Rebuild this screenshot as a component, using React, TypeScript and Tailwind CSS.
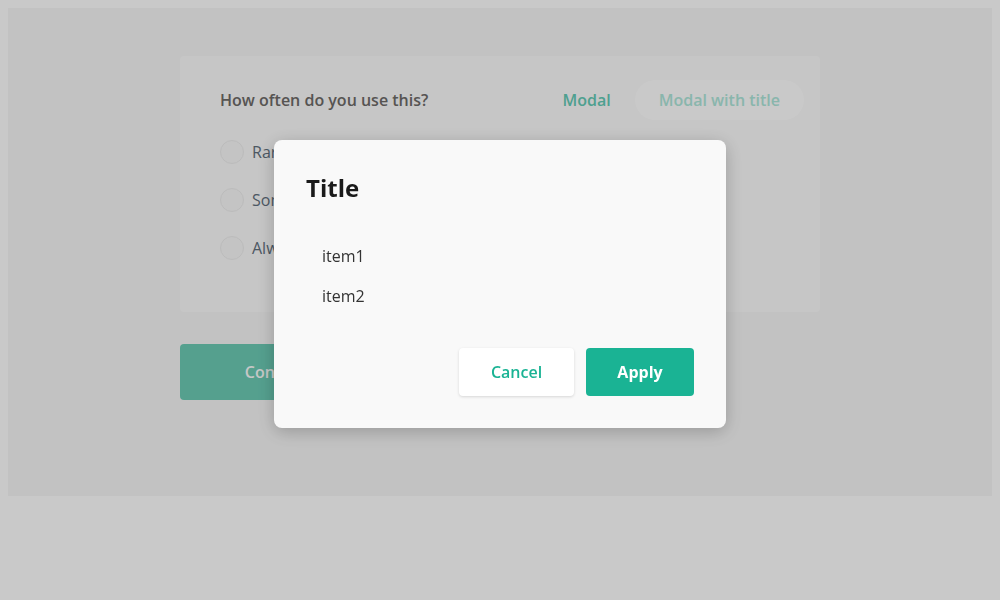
import React from "react";

export default function App() {
  const options = ["Rarely", "Sometimes", "Always"];
  return (
    <div
      className="relative min-h-[600px] w-full bg-white p-2"
      style={{ fontFamily: '"Open Sans", "Noto Sans", sans-serif' }}
    >
      <div className="flex h-[488px] flex-col items-center bg-[#f7f7f7] pt-12">
        <div className="w-[640px] rounded bg-[#fbfbfb] px-10 pt-6 pb-[52px]">
          <div className="flex h-10 items-center justify-between">
            <span className="text-base font-semibold text-[#6e6b69]">How often do you use this?</span>
            <div className="flex items-center gap-6 mr-[-24px]">
              <span className="text-base font-semibold text-[#63cbb6]">Modal</span>
              <span className="flex h-10 items-center rounded-full bg-white px-6 text-base font-semibold text-[#aee7db]">
                Modal with title
              </span>
            </div>
          </div>
          <div className="mt-5 flex flex-col gap-6">
            {options.map((o) => (
              <label key={o} className="flex h-6 items-center gap-2">
                <span className="h-6 w-6 rounded-full border border-[#eeeeee] bg-[#f9f9f9]" />
                <span className="text-base text-[#62707e]">{o}</span>
              </label>
            ))}
          </div>
        </div>
        <div className="mt-8 flex w-[640px]">
          <button className="flex h-14 w-[200px] items-center justify-center rounded bg-[#6ccbb5] text-base font-semibold text-[#fafdfc]">
            Continue
          </button>
        </div>
      </div>

      <div className="fixed inset-0 flex justify-center bg-black/[0.21] pt-[140px]">
        <div className="h-[288px] w-[452px] rounded-lg bg-[#f9f9f9] p-8 shadow-[0_4px_18px_rgba(0,0,0,0.22)]">
          <h2 className="text-2xl leading-8 font-bold text-[#1a1a1a]">Title</h2>
          <ul className="mt-8 pl-4">
            <li className="flex h-10 items-center text-base text-[#333333]">item1</li>
            <li className="flex h-10 items-center text-base text-[#333333]">item2</li>
          </ul>
          <div className="mt-8 flex justify-end gap-3">
            <button className="h-12 w-[115px] rounded bg-white text-base font-semibold text-[#1ab394] shadow-[0_1px_3px_rgba(0,0,0,0.14)]">
              Cancel
            </button>
            <button className="h-12 w-[108px] rounded bg-[#1ab394] text-base font-bold text-white">
              Apply
            </button>
          </div>
        </div>
      </div>
    </div>
  );
}
